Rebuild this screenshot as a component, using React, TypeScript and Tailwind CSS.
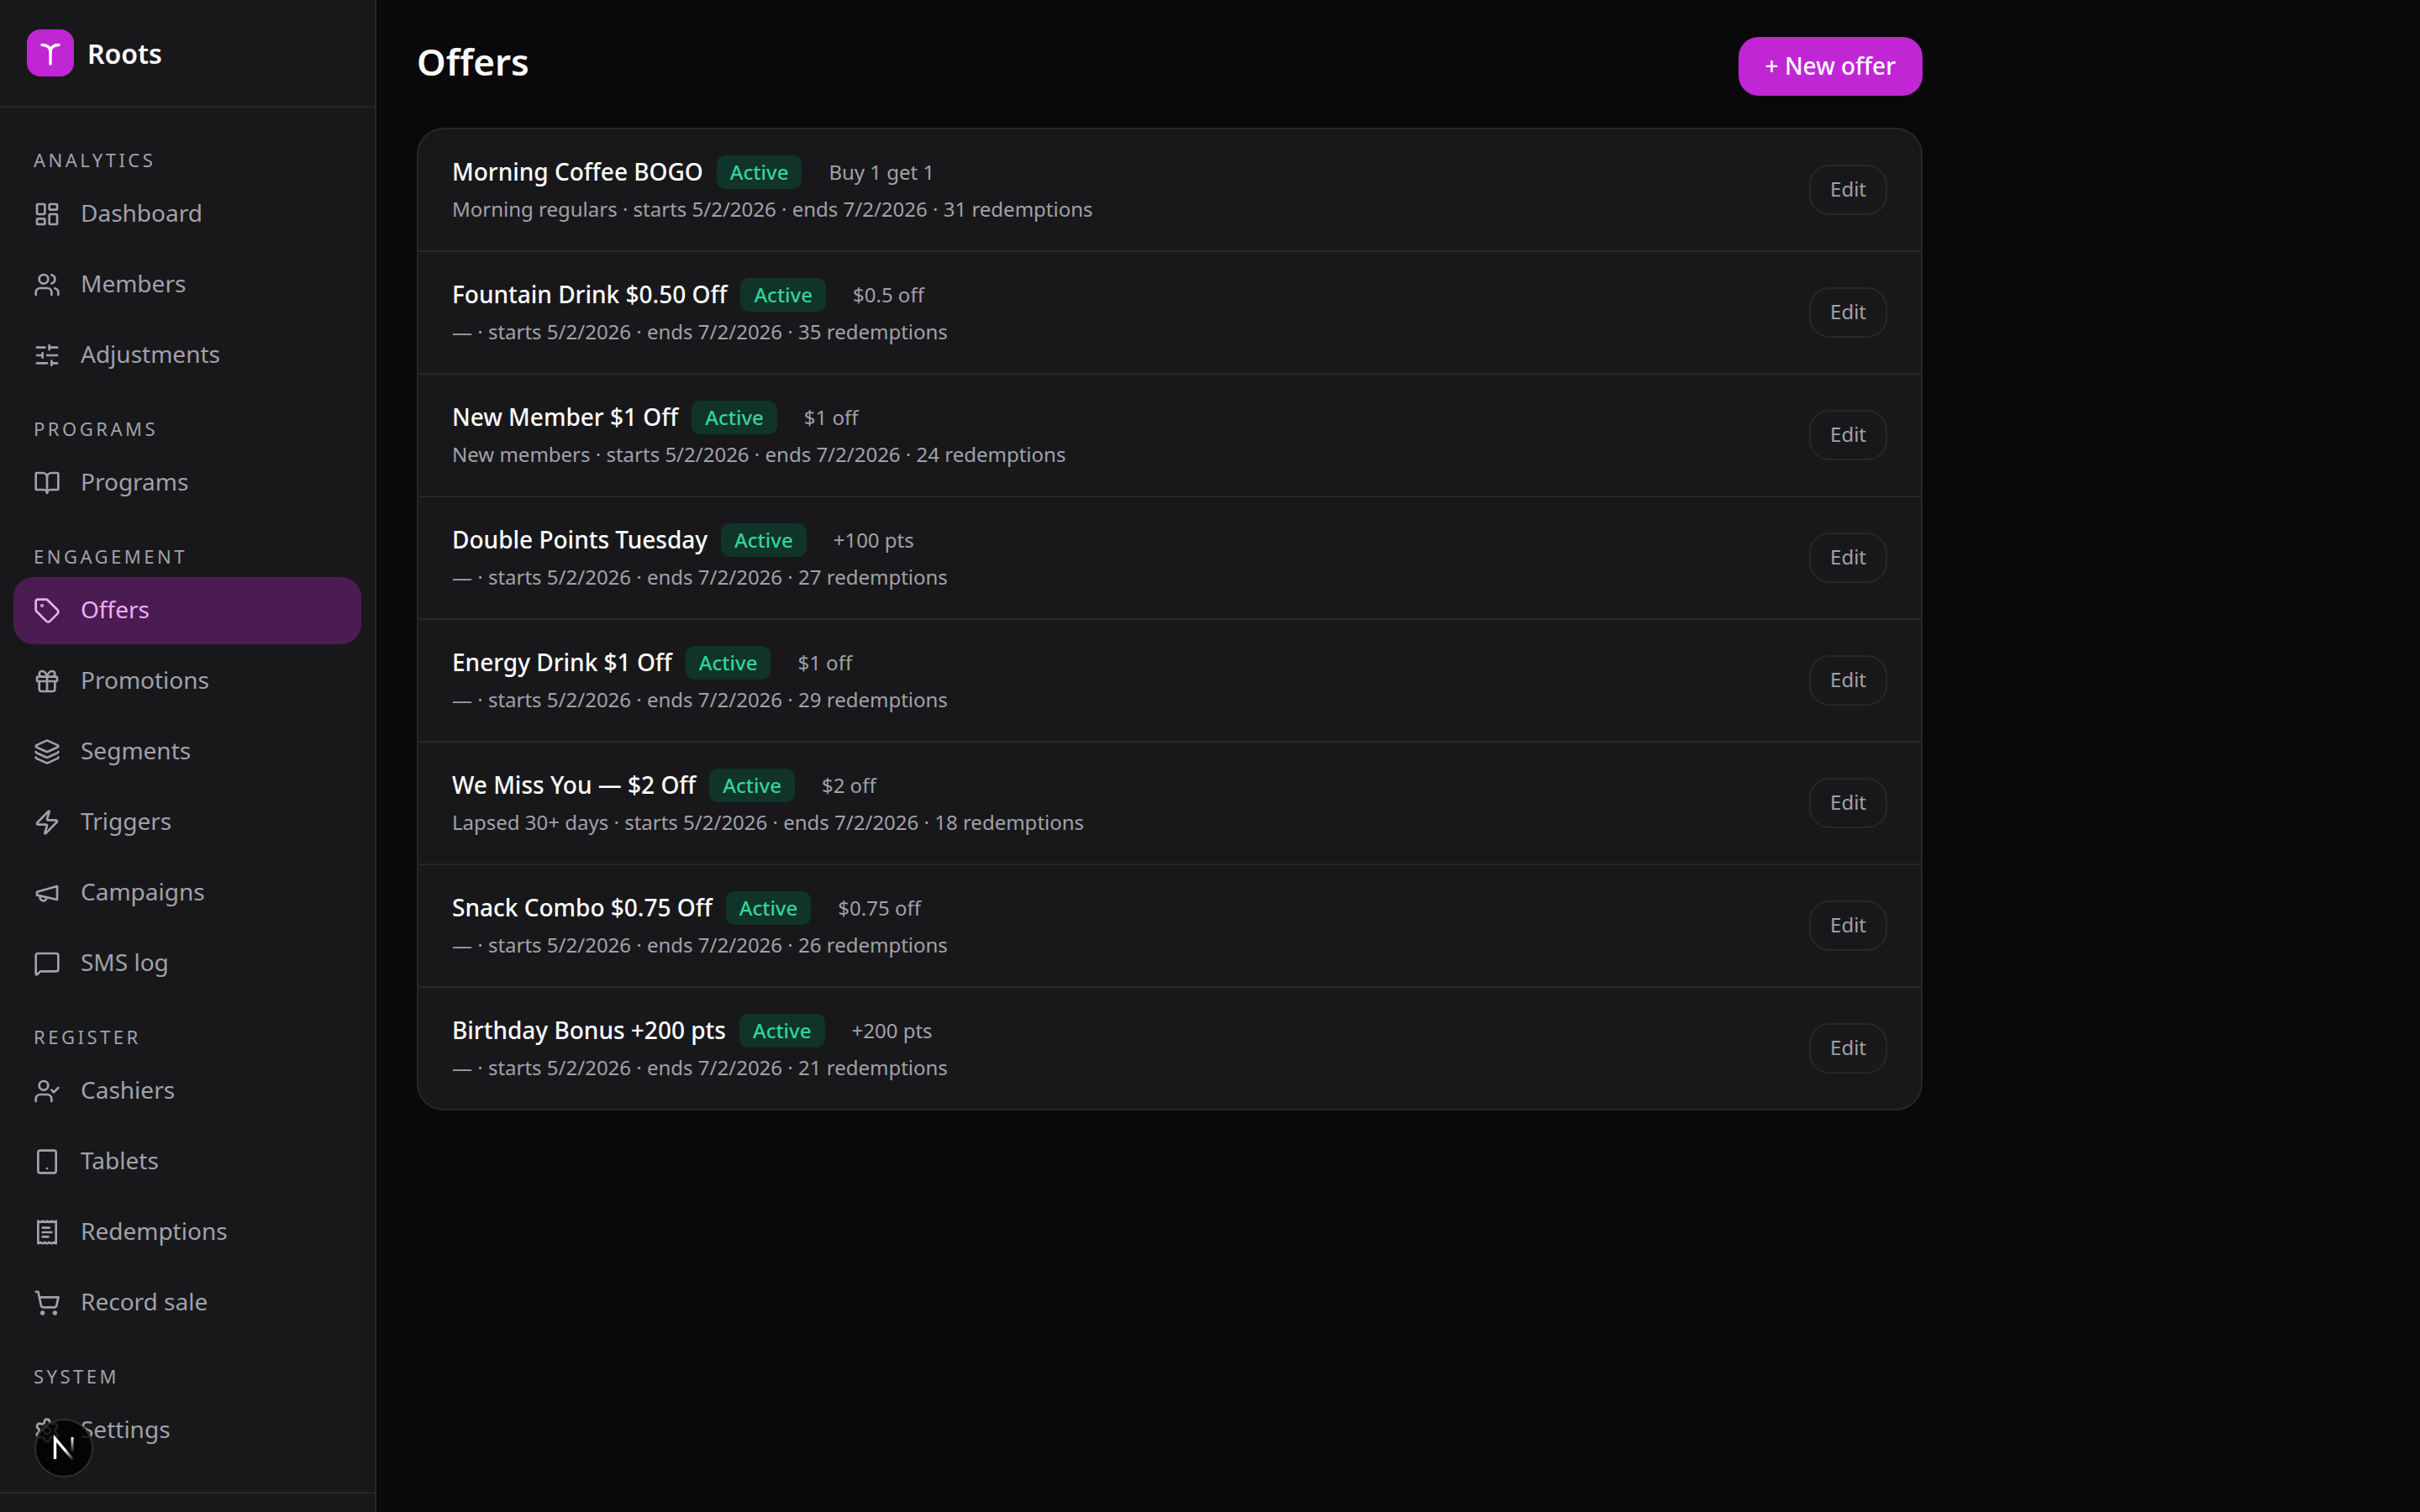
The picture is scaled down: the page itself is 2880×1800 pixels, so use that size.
import React from "react";
import {
  LayoutDashboard, Users, SlidersHorizontal, BookOpen, Tag, Gift, Layers, Zap,
  MessageSquare, UserCheck, Tablet, ShoppingCart, Settings,
} from "lucide-react";

function OldMegaphone({ size = 32, className = "" }: { size?: number; className?: string }) {
  return (
    <svg width={size} height={size} viewBox="0 0 24 24" fill="none" stroke="currentColor" strokeWidth="2" strokeLinecap="round" strokeLinejoin="round" className={className}>
      <path d="m3 11 18-5v12L3 14v-3z" />
      <path d="M11.6 16.8a3 3 0 1 1-5.8-1.6" />
    </svg>
  );
}

function ReceiptIcon({ size = 32, className = "" }: { size?: number; className?: string }) {
  return (
    <svg width={size} height={size} viewBox="0 0 24 24" fill="none" stroke="currentColor" strokeWidth="2" strokeLinecap="round" strokeLinejoin="round" className={className}>
      <path d="M4 2v20l2-1 2 1 2-1 2 1 2-1 2 1 2-1 2 1V2l-2 1-2-1-2 1-2-1-2 1-2-1-2 1Z" />
      <path d="M14 8H8" />
      <path d="M16 12H8" />
      <path d="M13 16H8" />
    </svg>
  );
}

const groups = [
  { label: "ANALYTICS", items: [["Dashboard", LayoutDashboard], ["Members", Users], ["Adjustments", SlidersHorizontal]] },
  { label: "PROGRAMS", items: [["Programs", BookOpen]] },
  { label: "ENGAGEMENT", items: [["Offers", Tag], ["Promotions", Gift], ["Segments", Layers], ["Triggers", Zap], ["Campaigns", OldMegaphone], ["SMS log", MessageSquare]] },
  { label: "REGISTER", items: [["Cashiers", UserCheck], ["Tablets", Tablet], ["Redemptions", ReceiptIcon], ["Record sale", ShoppingCart]] },
  { label: "SYSTEM", items: [["Settings", Settings]] },
] as const;

const offers = [
  ["Morning Coffee BOGO", "Buy 1 get 1", "Morning regulars", 31],
  ["Fountain Drink $0.50 Off", "$0.5 off", "—", 35],
  ["New Member $1 Off", "$1 off", "New members", 24],
  ["Double Points Tuesday", "+100 pts", "—", 27],
  ["Energy Drink $1 Off", "$1 off", "—", 29],
  ["We Miss You — $2 Off", "$2 off", "Lapsed 30+ days", 18],
  ["Snack Combo $0.75 Off", "$0.75 off", "—", 26],
  ["Birthday Bonus +200 pts", "+200 pts", "—", 21],
] as const;

export default function App() {
  return (
    <div className="flex h-screen overflow-hidden bg-[#09090b] font-['Noto_Sans',sans-serif] text-white">
      <aside className="flex h-full w-[448px] shrink-0 flex-col border-r-2 border-[#27272a] bg-[#18181b]">
        <div className="flex h-[128px] shrink-0 items-center gap-4 border-b-2 border-[#27272a] px-8">
          <div className="flex h-14 w-14 items-center justify-center rounded-2xl bg-[#c026d3]">
            <svg width="32" height="32" viewBox="0 0 32 32" fill="none" stroke="white" strokeWidth="3.4" strokeLinecap="round">
              <path d="M16 29V15C16 9 12 6.5 6 6.5" />
              <path d="M16 15C16 9 20 6.5 26 6.5" />
            </svg>
          </div>
          <span className="pt-0.5 text-[32px] font-semibold">Roots</span>
        </div>
        <nav className="min-h-0 flex-1 overflow-hidden px-4 pt-[46px]">
          {groups.map((g, i) => (
            <div key={g.label} className={i === 0 ? "" : "mt-[31px]"}>
              <div className="mb-2 px-6 text-[22px] tracking-[3.5px] text-[#a1a1aa]">{g.label}</div>
              <div className="flex flex-col gap-1">
                {g.items.map(([name, Icon]) => {
                  const active = name === "Offers";
                  return (
                    <div
                      key={name}
                      className={
                        active
                          ? "flex h-20 items-center gap-6 rounded-3xl bg-[#4a1c52] px-6 text-[28px] text-[#f0abfc]"
                          : "flex h-20 items-center gap-6 rounded-3xl px-6 text-[28px] text-[#a1a1aa]"
                      }
                    >
                      <Icon size={32} className="shrink-0" />
                      <span className="pb-1">{name}</span>
                    </div>
                  );
                })}
              </div>
            </div>
          ))}
        </nav>
        <div className="h-6 shrink-0 border-t-2 border-[#27272a]" />
      </aside>

      <main className="min-w-0 flex-1 px-12 pt-[44px]">
        <div className="w-[1792px]">
          <div className="mb-[38px] flex items-start justify-between">
            <h1 className="pb-0.5 text-[44px] font-semibold leading-[58px]">Offers</h1>
            <button className="flex h-[70px] items-center rounded-3xl bg-[#c026d3] px-8 pb-0.5 text-[28px] font-medium">+ New offer</button>
          </div>
          <div className="overflow-hidden rounded-[32px] border-2 border-[#27272a] bg-[#18181b]">
            {offers.map(([name, reward, audience, count], i) => (
              <div
                key={name}
                className={
                  i === 0
                    ? "flex h-[144px] items-center justify-between px-10"
                    : "flex h-[146px] items-center justify-between border-t-2 border-[#27272a] px-10"
                }
              >
                <div className="pb-0.5">
                  <div className="flex items-center">
                    <span className="-mt-px text-[28px] font-medium">{name}</span>
                    <span className="ml-4 mt-0.5 flex h-10 items-center rounded-[10px] bg-[#10332a] px-4 text-[24px] font-medium text-[#34d399]">Active</span>
                    <span className="ml-8 mt-0.5 text-[24px] text-[#a1a1aa]">{reward}</span>
                  </div>
                  <div className="mt-1.5 text-[24px] text-[#a1a1aa]">
                    {audience} · starts 5/2/2026 · ends 7/2/2026 · {count} redemptions
                  </div>
                </div>
                <button className="flex h-[60px] items-center rounded-3xl border-2 border-[#27272a] px-[23px] pb-0.5 text-[24px] text-[#a1a1aa]">Edit</button>
              </div>
            ))}
          </div>
        </div>
      </main>

      <div className="absolute bottom-[41px] left-[41px] flex h-[70px] w-[70px] items-center justify-center rounded-full border-2 border-[#2e2e2e] bg-black/80">
        <svg width="40" height="40" viewBox="0 0 40 40" fill="none">
          <defs>
            <linearGradient id="nfade" x1="8" y1="7" x2="33" y2="33" gradientUnits="userSpaceOnUse">
              <stop offset="0.55" stopColor="white" />
              <stop offset="1" stopColor="white" stopOpacity="0" />
            </linearGradient>
            <linearGradient id="nfade2" x1="30" y1="7" x2="30" y2="26" gradientUnits="userSpaceOnUse">
              <stop offset="0" stopColor="white" />
              <stop offset="1" stopColor="white" stopOpacity="0" />
            </linearGradient>
          </defs>
          <path d="M9.5 33V8.5L32 35" stroke="url(#nfade)" strokeWidth="3.4" />
          <path d="M30 7V26" stroke="url(#nfade2)" strokeWidth="3" />
        </svg>
      </div>
    </div>
  );
}
